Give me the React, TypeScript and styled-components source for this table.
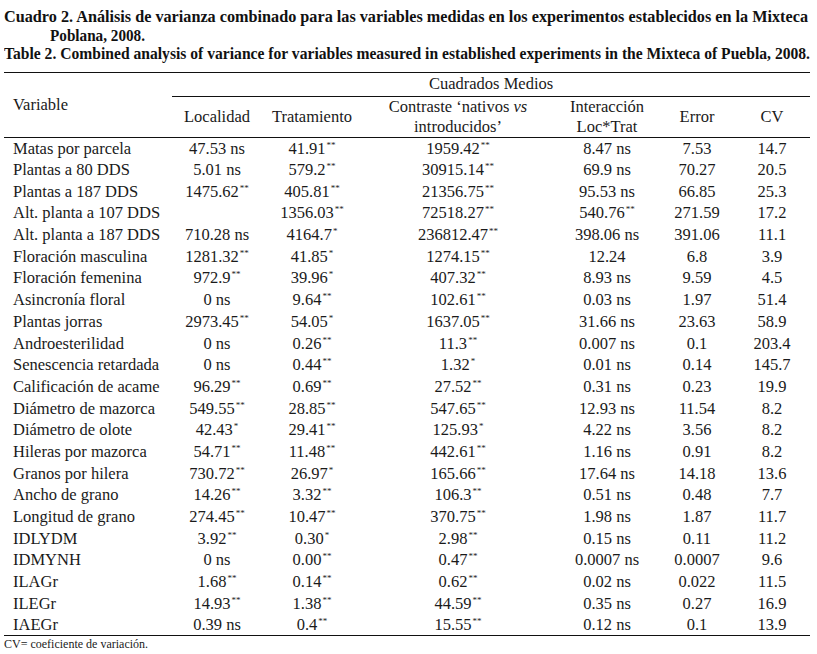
import React, { useLayoutEffect, useRef, useState } from "react";
import styled, { createGlobalStyle } from "styled-components";

const GlobalStyle = createGlobalStyle`
  html, body {
    margin: 0;
    padding: 0;
    background: #fff;
  }
  body {
    font-family: "Liberation Serif", "Times New Roman", serif;
    color: #1a1a1a;
  }
`;

const Page = styled.div`
  width: 817px;
  height: 654px;
  padding: 7px 7px 0 4px;
  box-sizing: border-box;
  overflow: hidden;
`;

const Caption = styled.div`
  display: flex;
  flex-direction: column;
  font-weight: bold;
  font-size: 17.5px;
  line-height: 18.5px;
  color: #111;
  margin-bottom: 9px;
`;

const CaptionLine = styled.div<{ $indent?: number }>`
  white-space: nowrap;
  padding-left: ${(p) => p.$indent ?? 0}px;
  height: 18.5px;
`;

const Squeeze = styled.span`
  display: inline-block;
  transform-origin: left center;
`;

const Table = styled.table`
  width: 806px;
  border-collapse: collapse;
  table-layout: fixed;
  font-size: 16.5px;
`;

const Head = styled.thead`
  border-top: 1.5px solid #111;
  border-bottom: 1.5px solid #111;
`;

const Th = styled.th<{ $left?: boolean; $rule?: boolean; $h?: number }>`
  font-weight: normal;
  text-align: ${(p) => (p.$left ? "left" : "center")};
  padding: 0 0 0 ${(p) => (p.$left ? 9 : 0)}px;
  vertical-align: middle;
  line-height: 20px;
  height: ${(p) => p.$h ?? 20}px;
  border-bottom: ${(p) => (p.$rule ? "1.5px solid #111" : "none")};
`;

const Body = styled.tbody`
  border-bottom: 1.5px solid #111;
`;

const Row = styled.tr`
  height: 21.7px;
`;

const Td = styled.td<{ $left?: boolean }>`
  padding: 0 0 0 ${(p) => (p.$left ? 9 : 0)}px;
  text-align: ${(p) => (p.$left ? "left" : "center")};
  white-space: nowrap;
  line-height: 21px;
`;

const Stars = styled.sup`
  font-size: 9px;
  line-height: 0;
  vertical-align: 6px;
  margin-left: 1px;
`;

const Note = styled.div`
  font-size: 12px;
  line-height: 14px;
  margin-top: 1px;
`;

// stretches or squeezes a caption line to the measured width of the original
const FitLine = ({ width, indent, children }: { width: number; indent?: number; children: React.ReactNode }) => {
  const ref = useRef<HTMLSpanElement>(null);
  const [scale, setScale] = useState(1);
  useLayoutEffect(() => {
    if (ref.current) {
      const w = ref.current.getBoundingClientRect().width;
      if (w > 0) setScale(width / w);
    }
  }, [width]);
  return (
    <CaptionLine $indent={indent}>
      <Squeeze ref={ref} style={{ transform: `scaleX(${scale})` }}>
        {children}
      </Squeeze>
    </CaptionLine>
  );
};

const rows: string[][] = [
  ["Matas por parcela", "47.53 ns", "41.91**", "1959.42**", "8.47 ns", "7.53", "14.7"],
  ["Plantas a 80 DDS", "5.01 ns", "579.2**", "30915.14**", "69.9 ns", "70.27", "20.5"],
  ["Plantas a 187 DDS", "1475.62**", "405.81**", "21356.75**", "95.53 ns", "66.85", "25.3"],
  ["Alt. planta a 107 DDS", "", "1356.03**", "72518.27**", "540.76**", "271.59", "17.2"],
  ["Alt. planta a 187 DDS", "710.28 ns", "4164.7*", "236812.47**", "398.06 ns", "391.06", "11.1"],
  ["Floración masculina", "1281.32**", "41.85*", "1274.15**", "12.24", "6.8", "3.9"],
  ["Floración femenina", "972.9**", "39.96*", "407.32**", "8.93 ns", "9.59", "4.5"],
  ["Asincronía floral", "0 ns", "9.64**", "102.61**", "0.03 ns", "1.97", "51.4"],
  ["Plantas jorras", "2973.45**", "54.05*", "1637.05**", "31.66 ns", "23.63", "58.9"],
  ["Androesterilidad", "0 ns", "0.26**", "11.3**", "0.007 ns", "0.1", "203.4"],
  ["Senescencia retardada", "0 ns", "0.44**", "1.32*", "0.01 ns", "0.14", "145.7"],
  ["Calificación de acame", "96.29**", "0.69**", "27.52**", "0.31 ns", "0.23", "19.9"],
  ["Diámetro de mazorca", "549.55**", "28.85**", "547.65**", "12.93 ns", "11.54", "8.2"],
  ["Diámetro de olote", "42.43*", "29.41**", "125.93*", "4.22 ns", "3.56", "8.2"],
  ["Hileras por mazorca", "54.71**", "11.48**", "442.61**", "1.16 ns", "0.91", "8.2"],
  ["Granos por hilera", "730.72**", "26.97*", "165.66**", "17.64 ns", "14.18", "13.6"],
  ["Ancho de grano", "14.26**", "3.32**", "106.3**", "0.51 ns", "0.48", "7.7"],
  ["Longitud de grano", "274.45**", "10.47**", "370.75**", "1.98 ns", "1.87", "11.7"],
  ["IDLYDM", "3.92**", "0.30*", "2.98**", "0.15 ns", "0.11", "11.2"],
  ["IDMYNH", "0 ns", "0.00**", "0.47**", "0.0007 ns", "0.0007", "9.6"],
  ["ILAGr", "1.68**", "0.14**", "0.62**", "0.02 ns", "0.022", "11.5"],
  ["ILEGr", "14.93**", "1.38**", "44.59**", "0.35 ns", "0.27", "16.9"],
  ["IAEGr", "0.39 ns", "0.4**", "15.55**", "0.12 ns", "0.1", "13.9"],
];

const colWidths = [168, 90, 100, 192, 106, 74, 76];

const Value = ({ v }: { v: string }) => {
  const m = v.match(/^(.*?)(\*+)$/);
  if (!m) return <>{v}</>;
  return (
    <>
      {m[1]}
      <Stars>{m[2]}</Stars>
    </>
  );
};

export default function App() {
  return (
    <>
      <GlobalStyle />
      <Page>
        <Caption>
          <FitLine width={804}>
            Cuadro 2. Análisis de varianza combinado para las variables medidas en los experimentos establecidos en la Mixteca
          </FitLine>
          <FitLine width={95} indent={46}>
            Poblana, 2008.
          </FitLine>
          <FitLine width={806}>
            Table 2. Combined analysis of variance for variables measured in established experiments in the Mixteca of Puebla, 2008.
          </FitLine>
        </Caption>
        <Table>
          <colgroup>
            {colWidths.map((w, i) => (
              <col key={i} style={{ width: w }} />
            ))}
          </colgroup>
          <Head>
            <tr>
              <Th $left rowSpan={2}>Variable</Th>
              <Th colSpan={6} $rule $h={23}>Cuadrados Medios</Th>
            </tr>
            <tr>
              <Th $h={39}>Localidad</Th>
              <Th $h={39}>Tratamiento</Th>
              <Th $h={39}>
                Contraste ‘nativos <i>vs</i>
                <br />
                introducidos’
              </Th>
              <Th $h={39}>
                Interacción
                <br />
                Loc*Trat
              </Th>
              <Th $h={39}>Error</Th>
              <Th $h={39}>CV</Th>
            </tr>
          </Head>
          <Body>
            {rows.map((r) => (
              <Row key={r[0]}>
                {r.map((c, i) => (
                  <Td key={i} $left={i === 0}>
                    <Value v={c} />
                  </Td>
                ))}
              </Row>
            ))}
          </Body>
        </Table>
        <Note>CV= coeficiente de variación.</Note>
      </Page>
    </>
  );
}
